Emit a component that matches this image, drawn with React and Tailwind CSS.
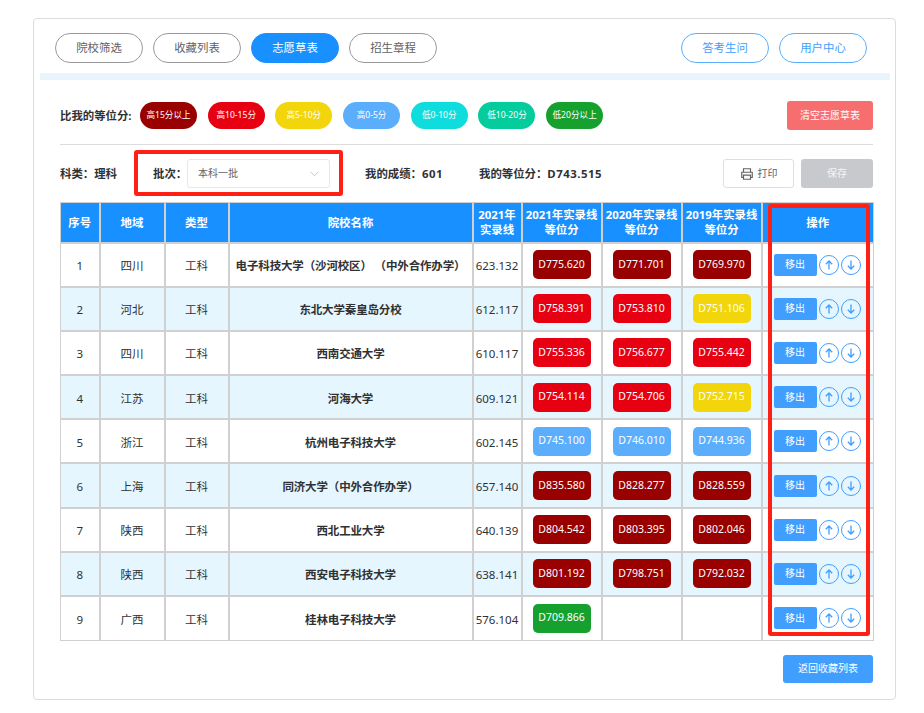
import React from "react";

const C = {
  dark: "bg-[#990000]",
  red: "bg-[#e60012]",
  yellow: "bg-[#f2d50a]",
  blue: "bg-[#5aaefc]",
  green: "bg-[#16a12f]",
};

const legend = [
  ["高15分以上", "bg-[#990000]"],
  ["高10-15分", "bg-[#e60012]"],
  ["高5-10分", "bg-[#f2d50a]"],
  ["高0-5分", "bg-[#5aaefc]"],
  ["低0-10分", "bg-[#0fdcdc]"],
  ["低10-20分", "bg-[#04cc9c]"],
  ["低20分以上", "bg-[#16a12f]"],
];

const rows = [
  ["1", "四川", "工科", "电子科技大学（沙河校区） （中外合作办学）", "623.132", ["D775.620", "dark"], ["D771.701", "dark"], ["D769.970", "dark"]],
  ["2", "河北", "工科", "东北大学秦皇岛分校", "612.117", ["D758.391", "red"], ["D753.810", "red"], ["D751.106", "yellow"]],
  ["3", "四川", "工科", "西南交通大学", "610.117", ["D755.336", "red"], ["D756.677", "red"], ["D755.442", "red"]],
  ["4", "江苏", "工科", "河海大学", "609.121", ["D754.114", "red"], ["D754.706", "red"], ["D752.715", "yellow"]],
  ["5", "浙江", "工科", "杭州电子科技大学", "602.145", ["D745.100", "blue"], ["D746.010", "blue"], ["D744.936", "blue"]],
  ["6", "上海", "工科", "同济大学（中外合作办学）", "657.140", ["D835.580", "dark"], ["D828.277", "dark"], ["D828.559", "dark"]],
  ["7", "陕西", "工科", "西北工业大学", "640.139", ["D804.542", "dark"], ["D803.395", "dark"], ["D802.046", "dark"]],
  ["8", "陕西", "工科", "西安电子科技大学", "638.141", ["D801.192", "dark"], ["D798.751", "dark"], ["D792.032", "dark"]],
  ["9", "广西", "工科", "桂林电子科技大学", "576.104", ["D709.866", "green"], null, null],
];

function Tab({ children, active, blue }) {
  const cls = active
    ? "bg-[#1890ff] border-[#1890ff] text-white"
    : blue
    ? "bg-white border-[#5aaefc] text-[#409eff]"
    : "bg-white border-[#999999] text-[#606266]";
  return (
    <button className={`h-[30px] w-[88px] rounded-[15px] border text-[11.4px] flex items-center justify-center ${cls}`}>
      {children}
    </button>
  );
}

function Score({ v }) {
  if (!v) return null;
  return (
    <div className={`mx-auto flex h-[29px] w-[58px] items-center justify-center rounded-[5px] text-[10.5px] text-white ${C[v[1]]}`}>
      {v[0]}
    </div>
  );
}

function Arrow({ down }) {
  return (
    <span className="flex h-[20px] w-[20px] items-center justify-center rounded-full border border-[#409eff] text-[#409eff]">
      <svg width="12" height="12" viewBox="0 0 12 12" fill="none" stroke="currentColor" strokeWidth="1.3">
        {down ? <path d="M6 1.5V10M2.8 6.8 6 10l3.2-3.2" /> : <path d="M6 10.5V2M2.8 5.2 6 2l3.2 3.2" />}
      </svg>
    </span>
  );
}

const th = "border-2 border-t border-[#d0d0d0] first:border-l last:border-r font-bold text-white text-[11.4px] leading-[15px] p-0 text-center";
const td = "border-2 border-[#d0d0d0] first:border-l last:border-r [tr:last-child_&]:border-b p-0 text-center text-[11.5px] text-[#303133]";

export default function App() {
  return (
    <div className="relative h-[713px] w-[924px] bg-white pl-[33px] pt-[18px] font-['Noto_Sans','Noto_Sans_CJK_SC',sans-serif]">
      <div className="h-[682px] w-[863px] rounded-[4px] border border-[#dcdcdc] pt-[14px]">
        <div className="flex items-center justify-between pl-[21px] pr-[28px]">
          <div className="flex gap-[10px]">
            <Tab>院校筛选</Tab>
            <Tab>收藏列表</Tab>
            <Tab active>志愿草表</Tab>
            <Tab>招生章程</Tab>
          </div>
          <div className="flex gap-[10px]">
            <Tab blue>答考生问</Tab>
            <Tab blue>用户中心</Tab>
          </div>
        </div>
        <div className="ml-[6px] mt-[10px] h-[7px] w-[850px] bg-[#e8f5fc]" />

        <div className="ml-[26px] mr-[22px] mt-[21px] flex items-center justify-between border-b border-[#dcdcdc] pb-[14px]">
          <div className="flex items-center">
            <span className="w-[80px] whitespace-nowrap text-[11.4px] font-bold text-[#303133]">比我的等位分:</span>
            <div className="flex gap-[10.7px]">
              {legend.map(([t, c]) => (
                <span key={t} className={`flex h-[27px] w-[57px] items-center justify-center rounded-[14px] text-[8.6px] text-white ${c}`}>
                  {t}
                </span>
              ))}
            </div>
          </div>
          <button className="flex h-[29px] w-[86px] items-center justify-center rounded-[3px] bg-[#f76e6e] text-[10px] text-white">
            清空志愿草表
          </button>
        </div>

        <div className="ml-[26px] mr-[22px] mt-[14px] flex h-[29px] items-center justify-between">
          <div className="flex items-center text-[11.4px] font-bold text-[#303133]">
            <span className="w-[93px]">{"科类\uFF1A理科"}</span>
            <span className="w-[34px] whitespace-nowrap">{"批次\uFF1A"}</span>
            <div className="flex h-[29px] w-[143px] items-center justify-between rounded-[3px] border border-[#e4e7ed] pl-[10px] pr-[9px] text-[10px] font-normal text-[#606266]">
              本科一批
              <svg width="11" height="11" viewBox="0 0 12 12" fill="none" stroke="#c0c4cc" strokeWidth="1">
                <path d="M1.5 4 6 8.5 10.5 4" />
              </svg>
            </div>
            <span className="ml-[35px] w-[114px]">{"我的成绩\uFF1A"}<span className="tracking-[0.5px]">601</span></span>
            <span>{"我的等位分\uFF1A"}<span className="tracking-[0.5px]">D743.515</span></span>
          </div>
          <div className="flex gap-[7px]">
            <button className="flex h-[29px] w-[71px] items-center justify-center gap-[4px] rounded-[3px] border border-[#dcdfe6] text-[10px] text-[#606266]">
              <svg width="14" height="14" viewBox="0 0 24 24" fill="none" stroke="currentColor" strokeWidth="2">
                <path d="M6 9V3h12v6M6 18H3v-9h18v9h-3" />
                <path d="M6 14h12v7H6z" />
              </svg>
              打印
            </button>
            <button className="flex h-[29px] w-[72px] items-center justify-center rounded-[3px] bg-[#c8c9cc] text-[10px] text-white/80">保存</button>
          </div>
        </div>

        <div className="ml-[26px] mt-[14px] w-[813px]">
          <table className="w-[813px] table-fixed border-collapse">
            <colgroup>
              <col className="w-[39px]" />
              <col className="w-[65px]" />
              <col className="w-[64px]" />
              <col className="w-[244px]" />
              <col className="w-[49px]" />
              <col className="w-[80px]" />
              <col className="w-[80px]" />
              <col className="w-[80px]" />
              <col className="w-[112px]" />
            </colgroup>
            <thead>
              <tr className="h-[40px] bg-[#1890ff]">
                <th className={th}>序号</th>
                <th className={th}>地域</th>
                <th className={th}>类型</th>
                <th className={th}>院校名称</th>
                <th className={th}>2021年<br />实录线</th>
                <th className={th}>2021年实录线<br />等位分</th>
                <th className={th}>2020年实录线<br />等位分</th>
                <th className={th}>2019年实录线<br />等位分</th>
                <th className={th}>操作</th>
              </tr>
            </thead>
            <tbody>
              {rows.map((r, i) => (
                <tr key={r[0]} className={`h-[44.2px] ${i % 2 ? "bg-[#e6f6fe]" : "bg-white"}`}>
                  <td className={`${td} pt-[2px]`}>{r[0]}</td>
                  <td className={`${td} pt-[2px]`}>{r[1]}</td>
                  <td className={`${td} pt-[2px]`}>{r[2]}</td>
                  <td className={`${td} pt-[2px] font-bold text-[#1a1a1a]`}>
                    <span className="tracking-[-0.15px]">{r[3]}</span>
                  </td>
                  <td className={`${td} pt-[2px]`}>{r[4]}</td>
                  <td className={td}><Score v={r[5]} /></td>
                  <td className={td}><Score v={r[6]} /></td>
                  <td className={td}><Score v={r[7]} /></td>
                  <td className={td}>
                    <div className="flex items-center gap-[2px] pl-[11px]">
                      <button className="flex h-[22px] w-[43px] items-center justify-center rounded-[2px] bg-[#409eff] text-[10px] text-white">移出</button>
                      <Arrow />
                      <Arrow down />
                    </div>
                  </td>
                </tr>
              ))}
            </tbody>
          </table>
        </div>

        <div className="mr-[22px] mt-[14px] flex justify-end">
          <button className="flex h-[28px] w-[90px] items-center justify-center rounded-[3px] bg-[#409eff] text-[10px] text-white">返回收藏列表</button>
        </div>
      </div>

      <div className="pointer-events-none absolute left-[134px] top-[150px] h-[46px] w-[209px] rounded-[3px] border-4 border-[#ff2015]" />
      <div className="pointer-events-none absolute left-[768px] top-[204px] h-[432px] w-[102px] rounded-[3px] border-4 border-[#ff2015]" />
    </div>
  );
}
